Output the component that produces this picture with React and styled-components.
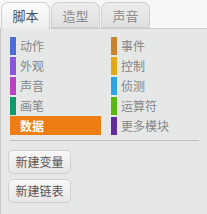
import React from "react";
import styled, { createGlobalStyle } from "styled-components";

const Global = createGlobalStyle`
  html, body { margin: 0; padding: 0; background: #f7f7f7; }
  body { font-family: "Noto Sans CJK SC", "Noto Sans", sans-serif; }
`;

const Page = styled.div`
  width: 207px;
  height: 214px;
  display: flex;
  flex-direction: column;
  overflow: hidden;
`;

const TabBar = styled.div`
  display: flex;
  gap: 1px;
  padding: 2px 0 0 1px;
  height: 26px;
  position: relative;
  z-index: 1;
`;

const Tab = styled.div`
  width: 49px;
  height: ${(p) => (p.$active ? "27px" : "26px")};
  box-sizing: border-box;
  border: 1px solid #cfcfcf;
  border-bottom: ${(p) => (p.$active ? "none" : "1px solid #cfcfcf")};
  border-radius: 7px 7px 0 0;
  background: ${(p) =>
    p.$active
      ? "linear-gradient(#fbfbfb, #eceeed)"
      : "linear-gradient(#ececec, #e0e0e0)"};
  color: ${(p) => (p.$active ? "#505050" : "#8c8c8c")};
  font-size: 13px;
  line-height: 25px;
  text-align: center;
`;

const Panel = styled.div`
  flex: 1;
  background: #e6e8e7;
  border-top: 1px solid #cdcdcd;
  border-left: 1px solid #c8c8c8;
  padding: 7px 0 0 9px;
`;

const Grid = styled.div`
  display: grid;
  grid-template-columns: 91px 91px;
  column-gap: 10px;
  row-gap: 1px;
`;

const Item = styled.div`
  display: flex;
  align-items: center;
  height: 19px;
  background: ${(p) => (p.$active ? p.$color : "transparent")};
`;

const Bar = styled.div`
  width: 6px;
  height: 18px;
  background: ${(p) => p.$color};
`;

const Label = styled.span`
  margin-left: 4px;
  font-size: 12px;
  color: ${(p) => (p.$active ? "#ffffff" : "#858585")};
  font-weight: ${(p) => (p.$active ? 700 : 400)};
  line-height: 18px;
`;

const Separator = styled.div`
  width: 189px;
  height: 1px;
  background: #bfbfbf;
  margin: 5px 0 0 0;
`;

const Buttons = styled.div`
  display: flex;
  flex-direction: column;
  align-items: flex-start;
  gap: 5px;
  margin: 9px 0 0 -2px;
`;

const Button = styled.div`
  width: 63px;
  height: 24px;
  box-sizing: border-box;
  border: 1px solid #d0d0d0;
  border-radius: 5px;
  background: linear-gradient(#f8f8f8, #e6e6e6);
  color: #555;
  font-size: 12px;
  line-height: 22px;
  text-align: center;
`;

const left = [
  ["动作", "#4c6cd6"],
  ["外观", "#8a55d8"],
  ["声音", "#bb42c3"],
  ["画笔", "#0e9a6c"],
  ["数据", "#ee7d16", true],
];
const right = [
  ["事件", "#c88330"],
  ["控制", "#e1a91a"],
  ["侦测", "#2ca5e2"],
  ["运算符", "#5cb712"],
  ["更多模块", "#632d99"],
];

export default function App() {
  const cells = [];
  for (let i = 0; i < 5; i++) {
    [left[i], right[i]].forEach(([t, c, a]) => {
      cells.push(
        <Item key={t} $active={a} $color={c}>
          <Bar $color={c} />
          <Label $active={a}>{t}</Label>
        </Item>
      );
    });
  }
  return (
    <Page>
      <Global />
      <TabBar>
        <Tab $active>脚本</Tab>
        <Tab>造型</Tab>
        <Tab>声音</Tab>
      </TabBar>
      <Panel>
        <Grid>{cells}</Grid>
        <Separator />
        <Buttons>
          <Button>新建变量</Button>
          <Button>新建链表</Button>
        </Buttons>
      </Panel>
    </Page>
  );
}
